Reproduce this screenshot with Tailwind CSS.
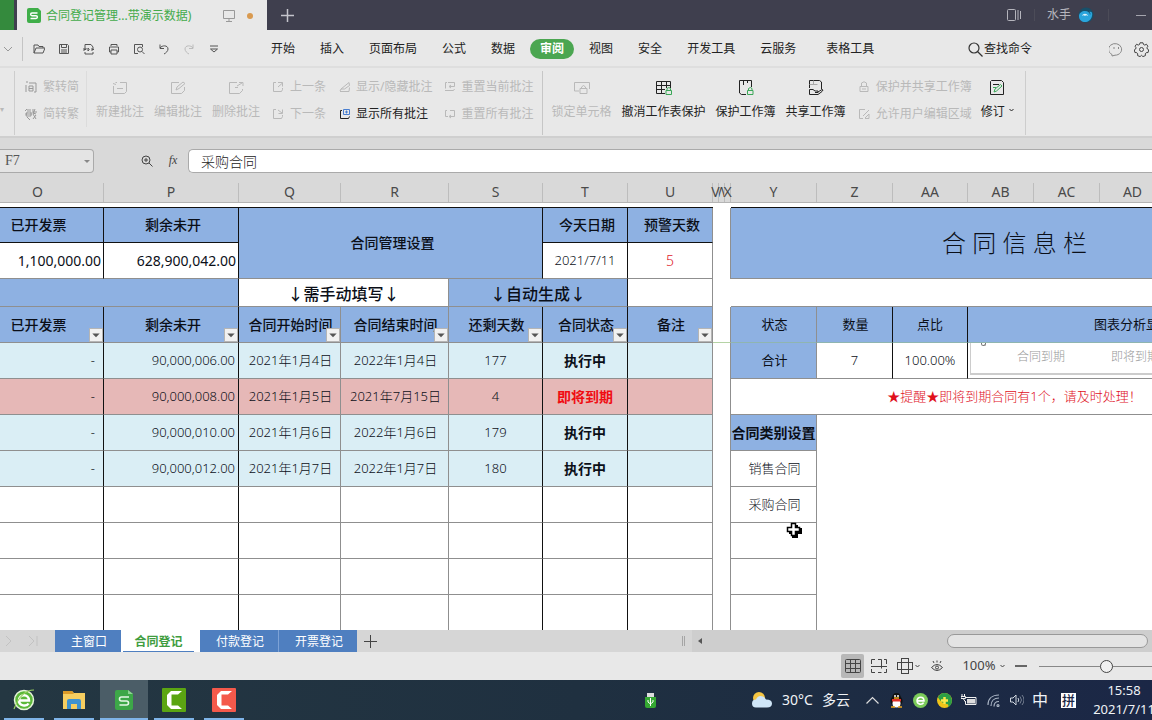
<!DOCTYPE html>
<html lang="zh-CN">
<head>
<meta charset="utf-8">
<title>合同登记管理 - WPS 表格</title>
<script src="https://cdn.jsdelivr.net/npm/@tailwindcss/browser@4"></script>
</head>
<body class="h-screen flex flex-col overflow-hidden bg-[#e8e8e8] text-xs text-[#222] whitespace-nowrap [font-family:'Noto_Sans','Noto_Sans_CJK_SC',sans-serif]">
<svg class="hidden">
  <symbol id="note" viewBox="0 0 16 14"><path d="M5 1.500H3.500M1.500 5v7.500h11l2-2v-9H8M1 2.500l3 1M5 7.500h6" /></symbol>
  <symbol id="noteedit" viewBox="0 0 16 14"><path d="M9 1.500H1.500v11h10l3-3V6M6 9l1-3 6-5 2 1.500-6 5z" /></symbol>
  <symbol id="notedel" viewBox="0 0 16 14"><path d="M9 1.500H1.500v11h10l3-3V8M7 6.500h3M9 5l5-3M11 1.500h4V5" /></symbol>
  <symbol id="drop" viewBox="0 0 13 13"><path d="M2.500 5h8L6.500 9z" fill="#555" /></symbol>
</svg>

<!-- Title bar -->
<header class="h-[30px] shrink-0 flex items-center bg-[#3f3f4e] text-[#b5b5bd]">
  <div class="w-[14px] h-full bg-[#348a3d] mr-[3px]"></div>
  <div class="w-[250px] h-full bg-[#e8e8e8] flex items-center pl-[10px] pt-px text-[#44ab4b]">
    <svg class="size-[15px] mr-1" viewBox="0 0 15 15"><path d="M2 0h9l3 3v10a2 2 0 0 1-2 2H2a2 2 0 0 1-2-2V2a2 2 0 0 1 2-2z" fill="#3fae49"/><path d="M10.500 5H5a1.200 1.200 0 0 0 0 2.700h4a1.200 1.200 0 0 1 0 2.800H3.500" fill="none" stroke="#fff" stroke-width="1.400"/></svg>
    <span>合同登记管理...带演示数据)</span>
    <svg class="ml-auto w-3 h-3" viewBox="0 0 12 12" fill="none" stroke="#999"><path d="M.5.5h11v8H.5zM6 8.500v3M3 11.500h6"/></svg>
    <span class="size-[6px] rounded-full bg-[#d99a50] ml-3 mr-[14px]"></span>
  </div>
  <button aria-label="新建标签" class="ml-[14px]"><svg class="size-[13px]" viewBox="0 0 13 13" stroke="#c4c4cc" stroke-width="1.500"><path d="M6.500 0v13M0 6.500h13"/></svg></button>
  <div class="ml-auto flex items-center">
    <svg class="w-[14px] h-3" viewBox="0 0 14 12" fill="none" stroke="#b5b5bd"><rect x=".5" y=".5" width="8" height="11" rx="1"/><path d="M11 1v10M13.500 2v8"/></svg>
    <i class="w-px h-3 bg-[#4c4c58] ml-[13px] mr-3"></i>
    <span>水手</span>
    <svg class="size-4 ml-[7px]" viewBox="0 0 16 16"><circle cx="8" cy="8" r="7.500" fill="#17506a"/><path d="M1 9c0-3 3-5 6-5s5 2 5 4c1-1 0-3-1-3 2-1 4 0 3 4-1 4-4 6-7 6s-6-2-6-6z" fill="#2aa5dc"/><path d="M4 9c1-3 5-3 6 0-2-1-2-1-3 0-1-1-2-1-3 0z" fill="#dff3fb"/></svg>
    <i class="w-px h-3 bg-[#4c4c58] ml-[14px] mr-[27px]"></i>
    <button aria-label="最小化" class="w-[10px] h-4 mr-[6px] flex items-center"><i class="w-full h-px bg-[#a5a5ae]"></i></button>
  </div>
</header>

<!-- Menu row -->
<nav class="h-[38px] shrink-0 flex items-center pt-[2px] border-b-2 border-[#dedede]">
  <svg class="w-[10px] h-2 ml-[3px]" viewBox="0 0 10 8" fill="none" stroke="#999"><path d="M1 2l4 4 4-4"/></svg>
  <i class="w-px h-6 bg-[#c4c4c4] ml-[9px] mr-[4px]"></i>
  <div class="flex -ml-px *:w-[25px] *:flex *:justify-center [&_svg]:size-3 [&_svg]:fill-none [&_svg]:stroke-[#555]">
    <button aria-label="打开"><svg viewBox="0 0 12 12"><path d="M1 10V2h4l1 1.500h4V5M1 10l2-5h9l-2 5z"/></svg></button>
    <button aria-label="保存"><svg viewBox="0 0 12 12"><path d="M1.500 1.500h8l1 1v8h-9zM3.500 1.500v3h5v-3M3 7h6M3 9h6"/></svg></button>
    <button aria-label="输出PDF"><svg viewBox="0 0 12 12"><path d="M2 4V1.500h6L10 4M2 9v2h8V9M1 8V5h2v1.500H1M5 5v3q2.500-1.500 0-3M9 8V5h2M9 6.500h2"/></svg></button>
    <button aria-label="打印"><svg viewBox="0 0 12 12"><path d="M3 3V1.500h6V3M3 9H1.500V4h9v5H9M3 7h6v4H3z"/></svg></button>
    <button aria-label="预览"><svg viewBox="0 0 12 12"><path d="M5 10.500H1.500v-9h8V4"/><circle cx="7" cy="6.500" r="2.500"/><path d="M9 8.500l2.500 2.500"/></svg></button>
    <button aria-label="撤销"><svg viewBox="0 0 12 12"><path d="M2 1.500v4h4M2 5c2-3 8-3 8 1 0 2-2 4-4 5"/></svg></button>
    <button aria-label="恢复" class="opacity-30"><svg viewBox="0 0 12 12"><path d="M10 1.500v4H6M10 5C8 2 2 2 2 6c0 2 2 4 4 5"/></svg></button>
    <button aria-label="更多"><svg viewBox="0 0 12 12"><path d="M2 3h8M2.500 6L6 9l3.500-3z"/></svg></button>
  </div>
  <div class="flex items-center gap-[5px] ml-[35px] *:px-[10px] *:h-5 *:rounded-full">
    <button>开始</button><button>插入</button><button>页面布局</button><button>公式</button><button>数据</button>
    <button class="bg-[#4ba651] text-white font-bold">审阅</button>
    <button>视图</button><button>安全</button><button>开发工具</button><button>云服务</button><button class="ml-[5px]">表格工具</button>
  </div>
  <button class="flex items-center gap-px ml-auto"><svg class="size-[15px]" viewBox="0 0 15 15" fill="none" stroke="#333" stroke-width="1.200"><circle cx="6" cy="6" r="5"/><path d="M9.500 9.500L14.500 14.500"/></svg>查找命令</button>
  <button aria-label="反馈" class="ml-[77px]"><svg class="size-[15px]" viewBox="0 0 15 15" fill="none" stroke="#888"><path d="M3 12.500A6.500 5.800 0 1 1 6 13.200L3 14z"/><path d="M5 5v2M9.500 5v2"/></svg></button>
  <button aria-label="设置" class="ml-[10px] mr-[3px]"><svg class="size-[15px]" viewBox="0 0 15 15" fill="none" stroke="#444"><path d="M6 .8h3l.5 1.700 1.300.6 1.600-.9 1.500 2-.9 1.500.3 1.300 1.400.8-.6 2.700-1.900.2-.9 1.100.1 1.800-2.500 1-1.400-1.300-1.400 1.300-2.500-1 .1-1.800-.9-1.100-1.900-.2L.3 7.800l1.400-.8.3-1.300-.9-1.500 1.500-2 1.600.9 1.300-.6z"/><circle cx="7.500" cy="7.500" r="2"/></svg></button>
</nav>

<!-- Ribbon -->
<section class="h-[70px] shrink-0 flex items-start pt-[3px] border-b-2 border-[#cfcfcf] text-[#b9b9b9] [&_svg]:fill-none [&_svg]:stroke-current">
  <span class="w-[14px] text-[8px] pt-[33px]">▾</span>
  <i class="w-px h-16 bg-[#cdcdcd]"></i>
  <div class="flex flex-col gap-[11px] pl-[10px] pt-[8px] *:h-4 *:flex *:items-center *:gap-[6px]">
    <button><svg class="size-3 text-[#999]" viewBox="0 0 12 12"><path d="M2 0v2M1 4v7M4 2h7v9H9M4 5h4v5H4zM4 7.500h4"/></svg>繁转简</button>
    <button><svg class="size-3 text-[#999]" viewBox="0 0 12 12"><path d="M2 1L0 3M2 2h4M2 4h4v4H1zM0 6h7M2 9l3 3M8 1v4l3 1M8 4h4M10 1L8 6l3 5M8 11l3-4"/></svg>简转繁</button>
  </div>
  <i class="w-px h-14 bg-[#dcdcdc] ml-[7px]"></i>
  <div class="flex gap-[10px] pl-[9px] pt-[10px] *:flex *:flex-col *:items-center *:gap-[9px]">
    <button><svg class="w-4 h-[14px]"><use href="#note"/></svg><span class="leading-4">新建批注</span></button>
    <button><svg class="w-4 h-[14px]"><use href="#noteedit"/></svg><span class="leading-4">编辑批注</span></button>
    <button><svg class="w-4 h-[14px]"><use href="#notedel"/></svg><span class="leading-4">删除批注</span></button>
  </div>
  <div class="flex flex-col gap-[11px] pl-3 pt-[8px] *:h-4 *:flex *:items-center *:gap-[6px]">
    <button><svg class="size-3" viewBox="0 0 12 12"><path d="M4 1.500H1.500v9h8l1-2V7M6 1.500h4.500v4M10.500 2L6 6"/></svg>上一条</button>
    <button><svg class="size-3" viewBox="0 0 12 12"><path d="M4 1.500H1.500v9h8l1-2V7M6 2l4 3M6.500 5.500h4v-4"/></svg>下一条</button>
  </div>
  <div class="flex flex-col gap-[11px] pl-[13px] pt-[8px] *:h-4 *:flex *:items-center *:gap-[5px]">
    <button><svg class="size-3" viewBox="0 0 12 12"><path d="M1 10.500h9l.5-4M2 8l8-6.500.5 3-5 3.500zM1 10l1-2"/></svg>显示/隐藏批注</button>
    <button class="text-[#222]"><svg class="size-3" viewBox="0 0 12 12"><path d="M3 2.500H1.500v8h8l1-2"/><path d="M4.500 1.500h6v5h-6zM6 4h3M7.500 2.500v3" stroke="#4a7fd0"/></svg>显示所有批注</button>
  </div>
  <div class="flex flex-col gap-[11px] pl-[11px] pt-[8px] *:h-4 *:flex *:items-center *:gap-[6px]">
    <button><svg class="size-3" viewBox="0 0 12 12"><path d="M3 1.500H1.500v6M1 9.500h8.500l1-1.500M4 1.500h6.500v4H6M7 4L5 5.500 7 7"/></svg>重置当前批注</button>
    <button><svg class="size-3" viewBox="0 0 12 12"><path d="M3 2.500H1.500v6H4M6 2.500h4.500v6H6M7 7L5 8.500 7 10"/></svg>重置所有批注</button>
  </div>
  <i class="w-px h-16 bg-[#c6c6c6] ml-[8px]"></i>
  <div class="flex gap-[10px] pl-[9px] pt-[9px] *:flex *:flex-col *:items-center *:gap-2">
    <button><svg class="size-4" viewBox="0 0 16 16"><path d="M5 11H0.500V2.500h15V9M6 8.500h7v5H6zM7.500 8.500V7q2-3 4 0v1.500"/></svg><span class="leading-4">锁定单元格</span></button>
    <button class="text-[#222]"><svg class="size-4" viewBox="0 0 16 16"><path d="M9 13.500H.5v-12h14V8M.5 5.500h14M.5 9.500H9M5.500 1.500v12M10.500 1.500V8"/><path d="M10 10.500h5.500v4H10zM11 10.500V8.500q2-2 3.500 0v2" stroke="#3aa757"/></svg><span class="leading-4">撤消工作表保护</span></button>
    <button class="text-[#222]"><svg class="size-4" viewBox="0 0 16 16"><path d="M8 14.500H3.500l-2-1.500V.5h12V7M5.500.5V5M9.500.5V3"/><path d="M9.500 10.500H15v4H9.500zM10.500 10.500V8.500q2-2 3.500 0v2" stroke="#3aa757"/></svg><span class="leading-4">保护工作簿</span></button>
    <button class="text-[#222]"><svg class="size-4" viewBox="0 0 16 16"><path d="M1.500 8V.5h10l2 1.500V9" /><path d="M5.500.5V4M1.500 4.500h8" stroke="#aaa"/><path d="M1.500 14.500v-5H5l2 1.500h3v1.500H7M10 12l4-2.500q2 0 0 2l-4 3H1.500"/></svg><span class="leading-4">共享工作簿</span></button>
  </div>
  <div class="flex flex-col gap-[11px] pl-3 pt-[8px] *:h-4 *:flex *:items-center *:gap-[6px]">
    <button><svg class="size-3" viewBox="0 0 12 12"><path d="M2 5.500h8v5H2zM3.500 5.500V2q2.500-2.500 5 0v3.500M4 8h4"/></svg>保护并共享工作簿</button>
    <button><svg class="size-3" viewBox="0 0 12 12"><path d="M7 1.500H1.500v9H5M5 8l6-6M7 10.500h4V6L7 10"/></svg>允许用户编辑区域</button>
  </div>
  <button class="flex items-start gap-1 pl-[9px] pt-[9px] text-[#222]">
    <span class="flex flex-col items-end gap-2"><span class="pr-1"><svg class="size-4 -mr-1" viewBox="0 0 16 16"><path d="M2.500.5h10l2 2v12h-13V1.500zM4 4.500h6"/><path d="M5 12l1-3 5.500-4.500L13 6l-5.500 5zM4 7.500h3" stroke="#3aa757"/></svg></span><span class="leading-4">修订</span></span>
    <svg class="w-[5px] h-1 mt-[28px]" viewBox="0 0 5 4"><path d="M.5 1l2 2 2-2"/></svg>
  </button>
  <i class="w-px h-16 bg-[#cdcdcd] ml-[11px]"></i>
</section>

<!-- Name box and formula bar -->
<section class="h-[35px] shrink-0 flex items-end bg-[#d9d9d9]">
  <div class="w-[94px] h-6 flex items-center border border-l-0 border-[#aaa] rounded-r-[4px] bg-[#e4e4e4] pl-[5px] pr-[3px]">
    <input aria-label="名称框" value="F7" class="min-w-0 grow bg-transparent text-sm text-[#555] outline-none [font-family:'Liberation_Serif',serif]">
    <svg class="w-[6px] h-[5px] shrink-0" viewBox="0 0 6 5"><path d="M0 1h6L3 4z" fill="#888"/></svg>
  </div>
  <button aria-label="查找" class="ml-[47px] mb-[6px]"><svg class="size-3" viewBox="0 0 12 12" fill="none" stroke="#444"><circle cx="5" cy="5" r="4"/><path d="M8 8l3.500 3.500M3 5h4M5 3v4"/></svg></button>
  <button aria-label="插入函数" class="ml-[14px] mb-[5px] w-3 text-xs leading-4 italic text-[#444] [font-family:'Liberation_Serif',serif]">fx</button>
  <input aria-label="编辑栏" value="采购合同" class="ml-[9px] grow min-w-0 h-6 border border-r-0 border-[#aaa] rounded-l-[5px] bg-white pl-3 text-sm font-light outline-none">
</section>

<!-- Worksheet -->
<main class="grow min-h-0 relative overflow-hidden bg-white">
<table class="table-fixed w-[1327px] -ml-7 border-separate border-spacing-0 text-center text-sm leading-none text-[#0b0f18] [&_td]:p-0 [&_td]:border-r [&_td]:border-b [&_td]:border-[#8f8f8f] [&_button]:absolute [&_button]:right-0 [&_button]:bottom-0 [&_button]:size-[14px] [&_button]:bg-[#f1f1f1] [&_button]:border [&_button]:border-[#b5b5b5]">
  <colgroup>
    <col class="w-[132px]"><col class="w-[135px]"><col class="w-[102px]"><col class="w-[108px]"><col class="w-[94px]"><col class="w-[85px]"><col class="w-[85px]"><col class="w-[6px]"><col class="w-[6px]"><col class="w-[6px]"><col class="w-[86px]"><col class="w-[76px]"><col class="w-[75px]"><col class="w-[66px]"><col class="w-[66px]"><col class="w-[66px]"><col class="w-[66px]"><col class="w-[67px]">
  </colgroup>
  <thead class="bg-[#d9d9d9] text-[#4a4a4a]">
    <tr class="h-[30px] [&_th]:p-0 [&_th]:pt-[10px] [&_th]:font-normal [&_th]:border-b [&_th]:border-[#b4b4b4] [&_span]:h-[19px] [&_span]:flex [&_span]:items-center [&_span]:justify-center [&_span]:border-r [&_span]:border-[#bdbdbd] [&_span]:pb-[2px]">
      <th><span>O</span></th><th><span>P</span></th><th><span>Q</span></th><th><span>R</span></th><th><span>S</span></th><th><span>T</span></th><th><span>U</span></th><th><span>V</span></th><th><span class="overflow-hidden">W</span></th><th><span>X</span></th><th><span>Y</span></th><th><span>Z</span></th><th><span>AA</span></th><th><span>AB</span></th><th><span>AC</span></th><th><span>AD</span></th><th><span>AE</span></th><th><span>AF</span></th>
    </tr>
  </thead>
  <tbody>
    <tr class="h-[5px]"><td colspan="7" class="border-r-0! border-b-[#111]!"></td><td colspan="3" class="border-0!"></td><td colspan="8" class="border-b-[#111]!"></td></tr>
    <tr class="h-[35px] font-medium">
      <td class="bg-[#8eb1e2] border-[#111]! pl-[2px]!">已开发票</td><td class="bg-[#8eb1e2] border-[#111]! pl-1!">剩余未开</td>
      <td colspan="3" rowspan="2" class="bg-[#8eb1e2] border-r-[#111]! pl-1!">合同管理设置</td>
      <td class="bg-[#8eb1e2] border-[#111]! pl-1!">今天日期</td><td class="bg-[#8eb1e2] border-b-[#111]! pl-1!">预警天数</td>
      <td colspan="3" rowspan="2" class="border-b-0!"></td>
      <td colspan="8" rowspan="2" class="bg-[#8eb1e2] text-2xl font-light">合 同 信 息 栏</td>
    </tr>
    <tr class="h-9">
      <td class="border-r-[#111]! text-right pr-[2px]!">1,100,000.00</td><td class="border-r-[#111]! text-right pr-[2px]!">628,900,042.00</td>
      <td class="border-r-[#111]! text-[13px] font-light">2021/7/11</td><td class="text-[#e0202c] font-light">5</td>
    </tr>
    <tr class="h-7 text-base leading-none font-medium">
      <td colspan="2" class="bg-[#8eb1e2] border-r-[#111]!"></td><td colspan="2" class="[font-family:'Noto_Sans_CJK_SC',sans-serif]">↓需手动填写↓</td><td colspan="2" class="bg-[#8eb1e2] border-r-[#111]! [font-family:'Noto_Sans_CJK_SC',sans-serif]">↓自动生成↓</td><td></td>
      <td colspan="3" class="border-0!"></td><td colspan="8" class="border-r-0!"></td>
    </tr>
    <tr class="h-9 font-medium [&_td]:relative">
      <td class="bg-[#8eb1e2] border-r-[#111]! pl-[2px]!">已开发票<button aria-label="筛选"><svg viewBox="0 0 13 13"><use href="#drop"/></svg></button></td>
      <td class="bg-[#8eb1e2] border-r-[#111]! pl-1!">剩余未开<button aria-label="筛选"><svg viewBox="0 0 13 13"><use href="#drop"/></svg></button></td>
      <td class="bg-[#8eb1e2] pl-[2px]!">合同开始时间<button aria-label="筛选"><svg viewBox="0 0 13 13"><use href="#drop"/></svg></button></td>
      <td class="bg-[#8eb1e2] pl-[2px]!">合同结束时间<button aria-label="筛选"><svg viewBox="0 0 13 13"><use href="#drop"/></svg></button></td>
      <td class="bg-[#8eb1e2] border-r-[#111]! pl-[2px]!">还剩天数<button aria-label="筛选"><svg viewBox="0 0 13 13"><use href="#drop"/></svg></button></td>
      <td class="bg-[#8eb1e2] border-r-[#111]! pl-[2px]!">合同状态<button aria-label="筛选"><svg viewBox="0 0 13 13"><use href="#drop"/></svg></button></td>
      <td class="bg-[#8eb1e2] pl-[2px]!">备注<button aria-label="筛选"><svg viewBox="0 0 13 13"><use href="#drop"/></svg></button></td>
      <td colspan="3" class="border-b-[#b5d3a5]!"></td>
      <td class="bg-[#8eb1e2] text-[13px] font-normal border-b-[#8fb5b0]! pl-[2px]!">状态</td><td class="bg-[#8eb1e2] text-[13px] font-normal border-r-[#111]! border-b-[#8fb5b0]! pl-[2px]!">数量</td><td class="bg-[#8eb1e2] text-[13px] font-normal border-r-[#111]! border-b-[#8fb5b0]!">点比</td>
      <td colspan="5" class="bg-[#8eb1e2] text-[13px] font-normal border-b-[#8fb5b0]!">图表分析显示</td>
    </tr>
    <tr class="h-9 bg-[#daeef5] text-[13px] font-light">
      <td class="border-r-[#111]! text-right pr-2!">-</td><td class="border-r-[#111]! text-right pr-[3px]!">90,000,006.00</td><td class="pl-[2px]!">2021年1月4日</td><td class="pl-[2px]!">2022年1月4日</td><td class="border-r-[#111]!">177</td><td class="border-r-[#111]! text-sm font-bold">执行中</td><td></td>
      <td colspan="3" class="bg-white border-b-0!"></td>
      <td class="bg-[#8eb1e2] font-normal pl-[2px]!">合计</td><td class="bg-white border-r-[#111]!">7</td><td class="bg-white border-r-[#111]!">100.00%</td>
      <td colspan="5" class="bg-white align-top"><div class="relative ml-[2px] h-[32px] border-l border-b-2 border-[#ccc] flex items-center gap-[46px] pl-[46px] pb-[2px] text-xs text-[#999]"><i class="absolute left-[10px] top-0 w-[5px] h-[3px] rounded-b-full border border-t-0 border-[#777]"></i><span>合同到期</span><span>即将到期</span></div></td>
    </tr>
    <tr class="h-9 bg-[#e6b8b7] text-[13px] font-light">
      <td class="border-r-[#111]! text-right pr-2!">-</td><td class="border-r-[#111]! text-right pr-[3px]!">90,000,008.00</td><td class="pl-[2px]!">2021年1月5日</td><td class="pl-[2px]!">2021年7月15日</td><td class="border-r-[#111]!">4</td><td class="border-r-[#111]! text-sm font-bold text-[#f00d12]">即将到期</td><td></td>
      <td colspan="3" class="bg-white border-b-0!"></td><td colspan="8" class="bg-white text-[#e0101c]">★提醒★即将到期合同有1个，请及时处理！</td>
    </tr>
    <tr class="h-9 bg-[#daeef5] text-[13px] font-light">
      <td class="border-r-[#111]! text-right pr-2!">-</td><td class="border-r-[#111]! text-right pr-[3px]!">90,000,010.00</td><td class="pl-[2px]!">2021年1月6日</td><td class="pl-[2px]!">2022年1月6日</td><td class="border-r-[#111]!">179</td><td class="border-r-[#111]! text-sm font-bold">执行中</td><td></td>
      <td colspan="3" class="bg-white border-b-0!"></td><td class="bg-[#8eb1e2] text-sm font-bold">合同类别设置</td><td colspan="7" rowspan="6" class="bg-white border-0!"></td>
    </tr>
    <tr class="h-9 bg-[#daeef5] text-[13px] font-light">
      <td class="border-r-[#111]! text-right pr-2!">-</td><td class="border-r-[#111]! text-right pr-[3px]!">90,000,012.00</td><td class="pl-[2px]!">2021年1月7日</td><td class="pl-[2px]!">2022年1月7日</td><td class="border-r-[#111]!">180</td><td class="border-r-[#111]! text-sm font-bold">执行中</td><td></td>
      <td colspan="3" class="bg-white border-b-0!"></td><td class="bg-white pl-[2px]!">销售合同</td>
    </tr>
    <tr class="h-9 text-[13px] font-light"><td class="border-r-[#111]!"></td><td class="border-r-[#111]!"></td><td></td><td></td><td class="border-r-[#111]!"></td><td class="border-r-[#111]!"></td><td></td><td colspan="3" class="border-b-0!"></td><td class="pl-[2px]!">采购合同</td></tr>
    <tr class="h-9"><td class="border-r-[#111]!"></td><td class="border-r-[#111]!"></td><td></td><td></td><td class="border-r-[#111]!"></td><td class="border-r-[#111]!"></td><td></td><td colspan="3" class="border-b-0!"></td><td></td></tr>
    <tr class="h-9"><td class="border-r-[#111]!"></td><td class="border-r-[#111]!"></td><td></td><td></td><td class="border-r-[#111]!"></td><td class="border-r-[#111]!"></td><td></td><td colspan="3" class="border-b-0!"></td><td></td></tr>
    <tr class="h-9"><td class="border-r-[#111]!"></td><td class="border-r-[#111]!"></td><td></td><td></td><td class="border-r-[#111]!"></td><td class="border-r-[#111]!"></td><td></td><td colspan="3" class="border-b-0!"></td><td></td></tr>
  </tbody>
</table>
<svg class="absolute left-[786px] top-[349px] size-4" viewBox="0 0 16 16"><path d="M6 3h6v3h4v6h-4v4H6v-4H3V6h3z" fill="#000"/><path d="M5.500 1.500h4v4h4v4h-4v4h-4v-4h-4v-4h4z" fill="#fff" stroke="#000" stroke-width="1.500"/></svg>
</main>

<!-- Sheet tabs and horizontal scroll bar -->
<section class="h-[22px] shrink-0 flex items-center bg-[#d6d6d6]">
  <svg class="w-10 h-3 mr-[15px]" viewBox="0 0 40 12" fill="none" stroke="#c2c2c2"><path d="M6 1l5 5-5 5M29 1l5 5-5 5M37 1v10"/></svg>
  <div class="h-full flex text-white *:h-full *:flex *:items-center *:justify-center *:pl-[2px] *:pt-[2px]">
    <button class="w-[66px] bg-[#4f7fc0]">主窗口</button>
    <button class="w-[79px] bg-white text-[#3f9d3f] font-bold px-[6px]"><span class="h-full w-full flex items-center justify-center border-b border-[#4f7fc0]">合同登记</span></button>
    <button class="w-[79px] bg-[#4f7fc0] border-r border-[#7da2d6]">付款登记</button>
    <button class="w-[78px] bg-[#4f7fc0]">开票登记</button>
  </div>
  <button aria-label="新建工作表" class="ml-[7px]"><svg class="size-[13px]" viewBox="0 0 13 13" stroke="#444"><path d="M6.500 0v13M0 6.500h13"/></svg></button>
  <div class="ml-auto flex items-center h-full">
    <i class="h-[10px] w-[3px] border-x border-[#a5a5a5] mr-[7px]"></i>
    <div class="h-full w-[460px] bg-[#cecece] flex items-center pl-[6px] pr-[4px]">
      <svg class="w-1 h-[6px]" viewBox="0 0 4 6"><path d="M4 0v6L0 3z" fill="#555"/></svg>
      <i class="ml-auto w-[201px] h-[14px] rounded-full border border-[#999] bg-[#e4e4e4]"></i>
    </div>
  </div>
</section>

<!-- Status bar -->
<section class="h-7 shrink-0 flex items-center justify-end bg-[#e8e8e8] [&_svg]:fill-none [&_svg]:stroke-[#444]">
  <button aria-label="普通视图" class="w-[23px] h-6 flex items-center justify-center rounded-[2px] bg-[#b8b8b8]"><svg class="w-4 h-[14px]" viewBox="0 0 16 14"><rect x=".5" y=".5" width="15" height="13" rx="1"/><path d="M5.500 0v14M10.500 0v14M0 4.500h16M0 9.500h16"/></svg></button>
  <button aria-label="分页预览" class="ml-[7px]"><svg class="w-4 h-[14px]" viewBox="0 0 16 14"><path d="M4 .5H.5V5M7 .5h3.500v9M13 .5h2.500V5M0 7.500h16M.5 10v3.500H4M7 13.500h3.500M13 13.500h2.500V10"/></svg></button>
  <button aria-label="页面布局" class="ml-[10px] flex items-center gap-[2px]"><svg class="w-4 h-4" viewBox="0 0 16 16"><rect x=".5" y="4.500" width="15" height="7"/><rect x="4.500" y=".5" width="7" height="15"/></svg><svg class="w-[5px] h-[3px]" viewBox="0 0 5 3"><path d="M.5 0L2.500 2 4.500 0"/></svg></button>
  <button aria-label="护眼模式" class="ml-[11px]"><svg class="w-3 h-3" viewBox="0 0 12 12"><path d="M.5 7.500q5.500-6 11 0-5.500 6-11 0zM3 3L2 1M6 2.500V.5M9 3l1-2"/><circle cx="6" cy="7.500" r="1.500"/></svg></button>
  <span class="ml-5 w-8 text-[13px] text-[#444] flex justify-center">100%</span>
  <svg class="w-[5px] h-[3px] ml-[5px] mr-[10px]" viewBox="0 0 5 3"><path d="M.5 0L2.500 2 4.500 0"/></svg>
  <button aria-label="缩小" class="w-3 h-4 flex items-center"><i class="w-full h-[2px] bg-[#666]"></i></button>
  <div class="ml-3 w-[113px] h-4 overflow-hidden flex items-center"><input type="range" aria-label="缩放" min="0" max="100" value="50" class="shrink-0 w-[134px] h-px appearance-none bg-[#888] [&::-webkit-slider-thumb]:appearance-none [&::-webkit-slider-thumb]:size-[13px] [&::-webkit-slider-thumb]:rounded-full [&::-webkit-slider-thumb]:border [&::-webkit-slider-thumb]:border-[#444] [&::-webkit-slider-thumb]:bg-[#f0f0f0]"></div>
</section>

<!-- Windows taskbar -->
<footer class="h-10 shrink-0 flex items-center bg-linear-to-r from-[#243742] via-[#1f3040] to-[#1b2746] text-[#f0f3f6]">
  <div class="h-full flex gap-[2px] *:w-12 *:h-full *:flex *:flex-col *:items-center *:justify-between *:pt-2 [&_i]:w-10 [&_i]:h-[2px] [&_i]:bg-[#7fb4e8] [&_svg]:size-6">
    <button aria-label="浏览器"><svg viewBox="0 0 24 24"><circle cx="12" cy="12" r="9.500" fill="#5cb83a" stroke="#e6f5da" stroke-width="1.500"/><path d="M7 12.500h10c0-7-10-7-10 0 0 5.500 7.500 6.500 9.500 3" fill="none" stroke="#fff" stroke-width="2.500"/><path d="M2 21C7 8 14 2 22 2" fill="none" stroke="#9ad45f" stroke-width="1.200"/></svg><i></i></button>
    <button aria-label="文件资源管理器"><svg viewBox="0 0 24 24"><path d="M1 3h9l2 2h11v16H1z" fill="#f7ce60"/><path d="M1 3h9l2 3H1z" fill="#dc9a28"/><path d="M5 21v-8q0-2 2-2h10q2 0 2 2v8h-4v-5H9v5z" fill="#3f92d0"/></svg><i></i></button>
    <button aria-label="WPS 表格" class="bg-[#4b5d67]"><svg viewBox="0 0 24 24"><path d="M5 2h11l5 4v14q0 2-2 2H5q-2 0-2-2V4q0-2 2-2z" fill="#3da748"/><path d="M16 2l5 4h-5z" fill="#8cd492"/><path d="M17 9H9.500a2 2 0 0 0 0 4h5a2 2 0 0 1 0 4H7.500" fill="none" stroke="#e5f6e6" stroke-width="1.600"/></svg><i class="w-full!"></i></button>
    <button aria-label="Camtasia"><svg viewBox="0 0 24 24"><rect width="24" height="24" rx="1" fill="#5ba512"/><path d="M20 3H9L5 7v10l4 4h11l-4-3.500H9.500V6.500H16z" fill="#fff"/></svg><i></i></button>
    <button aria-label="Camtasia 录像机"><svg viewBox="0 0 24 24"><rect width="24" height="24" rx="1" fill="#f4594b"/><path d="M20 3H9L5 7v10l4 4h11l-4-3.500H9.500V6.500H16z" fill="#fff"/></svg><i></i></button>
  </div>
  <div class="ml-auto flex items-center">
    <svg class="w-[11px] h-[15px] mr-[96px]" viewBox="0 0 11 15"><rect x="2" width="7" height="4" fill="#ddd"/><path d="M0 4h11v9q0 2-2 2H2q-2 0-2-2z" fill="#35a832"/><path d="M5.500 13V5M3 7v2l2.500 2L8 9V7" fill="none" stroke="#fff"/></svg>
    <svg class="w-5 h-4" viewBox="0 0 20 16"><circle cx="7" cy="6" r="6" fill="#f5c542"/><path d="M4 15.500a4 4 0 0 1 0-8q2-5 7-3 2 1 3 3 6 0 6 4 0 4-5 4z" fill="#cfe5f7"/></svg>
    <span class="ml-[10px] w-8 text-sm">30°C</span><span class="ml-2 text-sm">多云</span>
    <svg class="w-[13px] h-2 ml-4" viewBox="0 0 13 8" fill="none" stroke="#ddd" stroke-width="1.200"><path d="M.5 7.500l6-6 6 6"/></svg>
    <svg class="w-[13px] h-[15px] ml-[11px]" viewBox="0 0 13 15"><ellipse cx="6.500" cy="8" rx="6" ry="6" fill="#111"/><circle cx="6.500" cy="4" r="4" fill="#111"/><ellipse cx="6.500" cy="10.500" rx="4" ry="4" fill="#fff"/><circle cx="5" cy="3" r="1" fill="#fff"/><circle cx="8" cy="3" r="1" fill="#fff"/><path d="M2 6h9v2.500H2z" fill="#e03028"/><path d="M1 14h4M8 14h4M4 5h5" stroke="#f2a91e" stroke-width="1.500"/></svg>
    <svg class="size-[15px] ml-[10px]" viewBox="0 0 24 24"><circle cx="12" cy="12" r="12" fill="#7bcb5a"/><path d="M6.500 12.500h11c0-7.500-11-7.500-11 0 0 6 8 7 10.500 3" fill="none" stroke="#fff" stroke-width="2.600"/></svg>
    <svg class="size-[15px] ml-[9px]" viewBox="0 0 15 15"><circle cx="7.500" cy="7.500" r="7.500" fill="#f0c419"/><path d="M7.500 0a7.500 7.500 0 0 1 3 14.300Q13 11 9 11T1 4.500A7.500 7.500 0 0 1 7.500 0z" fill="#2c9f45"/><path d="M7.500 4v7M4 7.500h7" stroke="#fbe94b" stroke-width="2.500"/></svg>
    <svg class="w-4 h-3 ml-[9px]" viewBox="0 0 16 12"><path d="M5 3.500h10v7H4.500V7M1 0v2M3.500 0v2M0 2.500h4.500v2H0zM2.500 5l2 3" fill="none" stroke="#f0f0f0"/><path d="M6 5h8v4.500H6z" fill="#ddd"/></svg>
    <svg class="size-[13px] ml-[10px]" viewBox="0 0 13 13" fill="none" stroke="#a9b4c4" stroke-width="1.200"><path d="M1 11C1 5 5 1 12 1M4 12c0-5 3-8 8-8M7 12.500c0-3 2-5 5-5"/><circle cx="11" cy="11.500" r="1"/></svg>
    <svg class="w-[14px] h-3 ml-[10px]" viewBox="0 0 14 12" fill="none" stroke="#cdd5de"><path d="M.5 4h2.500l3-3v10L3 8H.5z"/><path d="M8 4q1.500 2 0 4"/><path d="M10 2.500q3 3.500 0 7M12 1q4 5 0 10" opacity=".5"/></svg>
    <span class="ml-2 text-base leading-5">中</span>
    <span class="ml-[13px] size-[15px] bg-white text-[#1b2746] text-[13px] leading-[15px] text-center font-medium">拼</span>
    <div class="ml-[17px] w-[62px] -mr-[3px] text-center text-[13px] leading-[19px]"><div>15:58</div><div>2021/7/11</div></div>
  </div>
</footer>
</body>
</html>
